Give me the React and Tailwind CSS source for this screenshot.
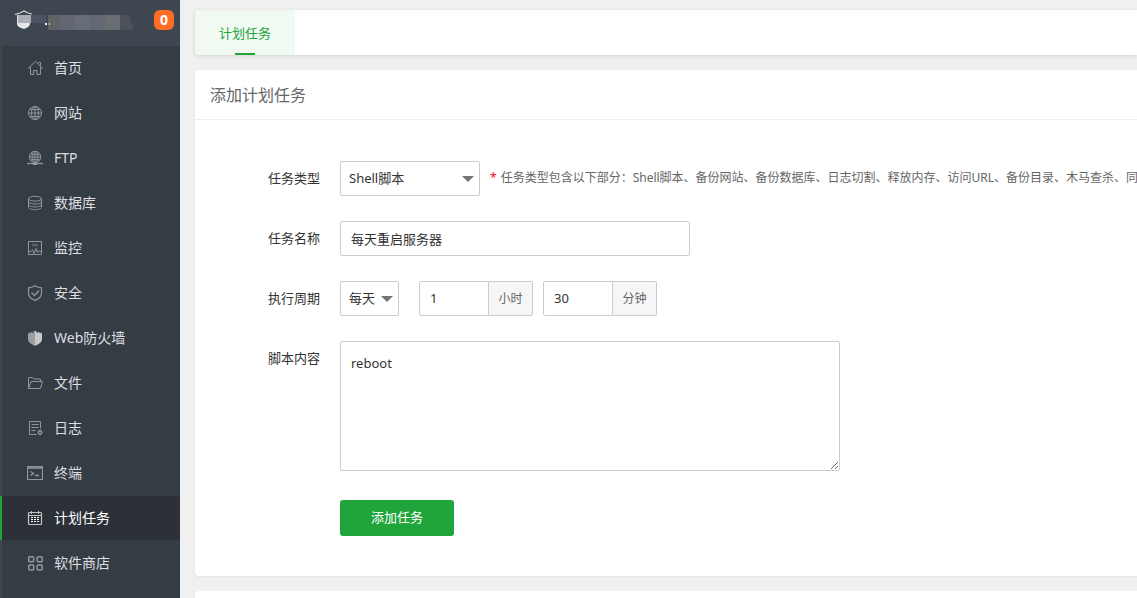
import React, { useState } from 'react';

const Icon = ({ children }) => (
  <svg className="h-4 w-4 shrink-0" viewBox="0 0 16 16" fill="none" stroke="currentColor" strokeWidth="1" aria-hidden="true">
    {children}
  </svg>
);

const HomeIcon = () => (
  <Icon>
    <path d="M1 8.500 8.500 1.300 16 8.500M3.500 7v7.500h3v-4h3.500v4h3.500V7M11.500 2.500h2v3" />
  </Icon>
);

const GlobeIcon = () => (
  <Icon>
    <circle cx="8" cy="8" r="6.500" />
    <ellipse cx="8" cy="8" rx="3.500" ry="6.500" />
    <path d="M8 1.500v13M1.500 8h13M2.500 4.500h11M2.500 11.500h11" />
  </Icon>
);

const FtpIcon = () => (
  <Icon>
    <circle cx="8" cy="7" r="5.700" />
    <ellipse cx="8" cy="7" rx="2.900" ry="5.700" />
    <path d="M8 1.500v11M2.500 7h11M3.300 4.300h9.400M3.300 9.700h9.400" />
    <path d="M0 13.500h16" strokeWidth="1.300" />
    <path d="M6 14h4" strokeWidth="2" />
  </Icon>
);

const DatabaseIcon = () => (
  <Icon>
    <ellipse cx="8" cy="3.700" rx="6.500" ry="2.400" />
    <path d="M1.500 3.700v8.600c0 1.300 2.900 2.400 6.500 2.400s6.500-1.100 6.500-2.400V3.700" />
    <path d="M1.500 6.600C1.500 7.900 4.400 9 8 9s6.500-1.100 6.500-2.400M1.500 9.500c0 1.300 2.900 2.400 6.500 2.400s6.500-1.100 6.500-2.400" />
  </Icon>
);

const MonitorIcon = () => (
  <Icon>
    <path d="M1.500 1.500h13v13h-13z" />
    <path d="M5 5h6" strokeWidth="2.500" opacity="0.4" />
    <path d="M2 11.500h2l1.500-2 1.500 4 2-5 1.500 4 1-2 .8 1H14" />
  </Icon>
);

const SafeIcon = () => (
  <Icon>
    <path d="M8 .8c2 1.300 4.300 2 6.500 2.100v5.300c0 3.300-2.700 5.700-6.500 7.200-3.800-1.500-6.500-3.900-6.500-7.200V2.900C3.700 2.800 6 2.100 8 .8z" strokeWidth="1.200" />
    <path d="m4.500 7.500 3 3 4.500-5" strokeWidth="1.400" />
  </Icon>
);

const WafIcon = () => (
  <Icon>
    <path d="M1 3.500 2.500 2.500v.8h1V2h1.500v.7h1.500V1H8v14.800C4 14.500 1 12 1 9z" fill="#9b9ea1" stroke="none" />
    <path d="m15 3.500-1.500-1v.8h-1V2H11v.7H9.500V1H8v14.800c4-1.300 7-3.800 7-6.800z" fill="#c6c8ca" stroke="none" />
  </Icon>
);

const FolderIcon = () => (
  <Icon>
    <path d="M1.500 13V3c0-.3.200-.5.500-.5h3.500l1.500 1.500h6c.3 0 .5.200.5.500v2M1.500 13.500 4 6.500h11.500L13.500 13.500z" />
  </Icon>
);

const LogIcon = () => (
  <Icon>
    <path d="M9.500 14.500h-7v-13h11v7" />
    <path d="M4.500 4.500h7M4.500 7.500h7M4.500 10.500h4" />
    <circle cx="13" cy="12.500" r="1.700" strokeWidth="1.400" />
    <path d="M13 9.800v1M13 14.200v1" />
  </Icon>
);

const TerminalIcon = () => (
  <Icon>
    <path d="M.5 1.500h15v13H.5z" strokeWidth="1.200" />
    <path d="M1 3h14" strokeWidth="2" opacity="0.8" />
    <path d="m3.500 6.500 3 2-3 2M8 10.500h4" strokeWidth="1.300" />
  </Icon>
);

const CalendarIcon = () => (
  <Icon>
    <rect x="1.500" y="2.500" width="13" height="12" rx="1" strokeWidth="1.200" />
    <path d="M2 5.500h12M4.500 1v3M11.500 1v3" />
    <path d="M4 7.500h8M4 9.500h8M4 11.500h8" stroke="#fff" strokeDasharray="2 1" />
  </Icon>
);

const StoreIcon = () => (
  <Icon>
    <rect x="1.700" y="1.700" width="5" height="5" rx="1" strokeWidth="1.500" />
    <rect x="10.200" y="1.700" width="5" height="5" rx="1" strokeWidth="1.500" />
    <rect x="1.700" y="10" width="5" height="5" rx="1" strokeWidth="1.500" />
    <rect x="10.200" y="10" width="5" height="5" rx="1" strokeWidth="1.500" />
  </Icon>
);

const menu = [
  { title: '首页', icon: HomeIcon },
  { title: '网站', icon: GlobeIcon },
  { title: 'FTP', icon: FtpIcon },
  { title: '数据库', icon: DatabaseIcon },
  { title: '监控', icon: MonitorIcon },
  { title: '安全', icon: SafeIcon },
  { title: 'Web防火墙', icon: WafIcon },
  { title: '文件', icon: FolderIcon },
  { title: '日志', icon: LogIcon },
  { title: '终端', icon: TerminalIcon },
  { title: '计划任务', icon: CalendarIcon, active: true },
  { title: '软件商店', icon: StoreIcon },
];

// Panel logo followed by the masked server address
const Logo = () => (
  <svg className="h-6 w-30" viewBox="0 0 120 24" aria-hidden="true">
    <path d="M3 5h13v9c0 2-3 4-6 5-4-1-7-3-7-5z" fill="#e6e7e9" />
    <path d="M1 4.500 6 3l4-2 4 2 4 1" fill="none" stroke="#d5d7da" strokeWidth="1.200" />
    <path d="M4 5h13v8H4z" fill="#abadb4" />
    <path d="M17 5h15v8H17z" fill="#4d5464" />
    <path d="M34 5h82v6l3 4v5H34z" fill="#4b525a" />
    <path d="M34 5h12v15H34z" fill="#5f6366" />
    <path d="M46 5h15v15H46z" fill="#626771" />
    <path d="M61 5h15v15H61z" fill="#666c78" />
    <path d="M76 5h15v15H76z" fill="#626874" />
    <path d="M91 5h15v15H91z" fill="#6a6e72" />
    <path d="M31 13h2v2h-2z" fill="#f3f3f3" />
    <path d="M35 13h1v2h-1z" fill="#d8cfa8" />
  </svg>
);

const Sidebar = () => (
  <aside className="flex w-[180px] shrink-0 flex-col bg-[#353d44]">
    <div className="flex h-[46px] shrink-0 items-start justify-between bg-[#3e464f] pt-[10px] pr-[6px] pl-[14px]">
      <Logo />
      <span className="flex h-5 w-5 shrink-0 items-center justify-center rounded-md bg-[#ff6e26] text-sm font-bold text-white">
        0
      </span>
    </div>
    <nav className="flex-1 border-l-2 border-[#444444]">
      <ul className="-ml-[2px] flex flex-col gap-px">
        {menu.map(({ title, icon: ItemIcon, active }) => (
          <li key={title}>
            <a
              href="#"
              className={`flex h-11 items-center gap-[11px] border-l-2 pl-[25px] text-sm ${
                active ? 'border-[#20a53a] bg-[#2c3138] text-white' : 'border-transparent text-[#dedfe0]'
              }`}
            >
              <span className={active ? 'text-[#c4c6c8]' : 'text-[#949799]'}>
                <ItemIcon />
              </span>
              {title}
            </a>
          </li>
        ))}
      </ul>
    </nav>
  </aside>
);

const FormRow = ({ label, id, children }) => (
  <div className="flex items-start gap-5">
    <label htmlFor={id} className="w-[125px] shrink-0 text-right leading-[35px]">
      {label}
    </label>
    {children}
  </div>
);

const Select = ({ id, className, options }) => (
  <div className={`relative shrink-0 ${className}`}>
    <select id={id} className="h-[35px] w-full appearance-none rounded-xs border border-[#cccccc] bg-white pl-2 outline-none">
      {options.map((option) => (
        <option key={option}>{option}</option>
      ))}
    </select>
    <svg className="pointer-events-none absolute top-[15px] right-[6px] h-[6px] w-3" viewBox="0 0 12 6" aria-hidden="true">
      <path d="M0 0h12L6 6z" fill="#757575" />
    </svg>
  </div>
);

const TimeInput = ({ unit, value, onChange }) => (
  <label className="flex h-[35px]">
    <input
      type="text"
      value={value}
      onChange={(e) => onChange(e.target.value)}
      className="w-[70px] rounded-l-xs border border-[#cccccc] px-[10px] outline-none"
    />
    <span className="flex w-11 items-center justify-center rounded-r-xs border border-l-0 border-[#cccccc] bg-[#f6f6f6] text-xs text-[#666666]">
      {unit}
    </span>
  </label>
);

const App = () => {
  const [name, setName] = useState('每天重启服务器');
  const [hour, setHour] = useState('1');
  const [minute, setMinute] = useState('30');
  const [script, setScript] = useState('reboot');

  return (
    <div className="flex h-screen overflow-hidden bg-[#f0f0f0] font-['Noto_Sans','Noto_Sans_CJK_SC',sans-serif] text-[13px] text-[#333333]">
      <Sidebar />
      <main className="flex min-w-0 flex-1 flex-col gap-[15px] overflow-hidden pt-[10px] pl-[15px]">
        <div className="flex h-[45px] shrink-0 rounded-l bg-white shadow-[0_1px_4px_rgba(0,0,0,0.12)]">
          <button type="button" className="flex w-[100px] flex-col items-center justify-between rounded-l bg-[#f0f9f2] text-[#20a53a]">
            <span className="pt-3 leading-[22px]">计划任务</span>
            <span className="h-[2px] w-5 bg-[#20a53a]" />
          </button>
        </div>

        <section className="shrink-0 rounded-l bg-white shadow-xs">
          <h1 className="h-[50px] border-b border-[#eeeeee] pl-[15px] text-base leading-[50px] text-[#666666]">添加计划任务</h1>
          <form className="flex flex-col gap-[25px] overflow-hidden pt-[41px] pb-10" onSubmit={(e) => e.preventDefault()}>
            <FormRow label="任务类型" id="type">
              <div className="flex gap-[10px]">
                <Select id="type" className="w-[140px]" options={['Shell脚本', '备份网站', '备份数据库', '日志切割']} />
                <p className="text-xs leading-[33px] whitespace-nowrap text-[#666666]">
                  <span className="mr-1 text-[#ff0000]">*</span>
                  任务类型包含以下部分：Shell脚本、备份网站、备份数据库、日志切割、释放内存、访问URL、备份目录、木马查杀、同步时间
                </p>
              </div>
            </FormRow>

            <FormRow label="任务名称" id="name">
              <input
                id="name"
                type="text"
                value={name}
                onChange={(e) => setName(e.target.value)}
                className="h-[35px] w-[350px] rounded-xs border border-[#cccccc] px-[10px] outline-none"
              />
            </FormRow>

            <FormRow label="执行周期" id="cycle">
              <div className="flex gap-[10px]">
                <Select id="cycle" className="mr-[10px] w-[59px]" options={['每天', '每周', '每月']} />
                <TimeInput unit="小时" value={hour} onChange={setHour} />
                <TimeInput unit="分钟" value={minute} onChange={setMinute} />
              </div>
            </FormRow>

            <FormRow label="脚本内容" id="script">
              <textarea
                id="script"
                value={script}
                onChange={(e) => setScript(e.target.value)}
                className="h-[130px] w-[500px] rounded-xs border border-[#cccccc] px-[10px] py-[10px] leading-[22px] outline-none"
              />
            </FormRow>

            <div className="pt-1 pl-[145px]">
              <button type="submit" className="block h-9 rounded-[3px] bg-[#20a53a] px-[31px] text-white">
                添加任务
              </button>
            </div>
          </form>
        </section>

        <section className="h-40 shrink-0 rounded-l bg-white shadow-xs" />
      </main>
    </div>
  );
};

export default App;
